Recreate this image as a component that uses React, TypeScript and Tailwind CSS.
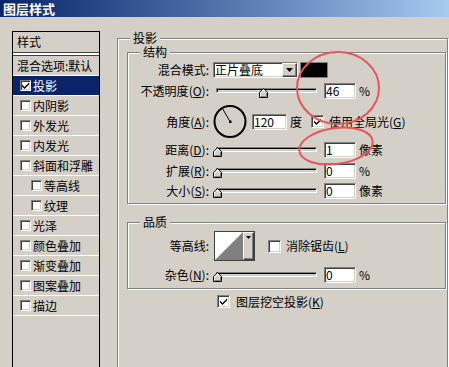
import React from "react";

const sunken =
  "border border-t-[#808080] border-l-[#808080] border-b-white border-r-white shadow-[inset_1px_1px_0_#404040,inset_-1px_-1px_0_#d4d0c8]";
const raised =
  "border border-t-white border-l-white border-b-[#404040] border-r-[#404040] shadow-[inset_-1px_-1px_0_#808080]";

function CheckMark() {
  return (
    <svg width="7" height="7" viewBox="0 0 7 7">
      <path d="M0 2.5 L2.5 5 L7 0.5 L7 2.5 L2.5 7 L0 4.5 Z" fill="#000" />
    </svg>
  );
}

function Check({ checked, small }: { checked?: boolean; small?: boolean }) {
  return (
    <span
      className={`flex shrink-0 items-center justify-center bg-white ${sunken} ${
        small ? "h-[11px] w-[11px]" : "h-[13px] w-[13px]"
      }`}
    >
      {checked && <CheckMark />}
    </span>
  );
}

function Mn({ children }: { children: React.ReactNode }) {
  return (
    <span>
      (<span className="underline underline-offset-1">{children}</span>)
    </span>
  );
}

function TextBox({ value, w = "w-[32px]" }: { value: string; w?: string }) {
  return (
    <div className={`flex h-[16px] ${w} shrink-0 items-center bg-white pl-[1px] leading-[12px] ${sunken}`}>
      {value}
    </div>
  );
}

function Thumb() {
  return (
    <svg width="9" height="10" viewBox="0 0 9 10" className="block">
      <polygon points="4.5,0.5 8.5,4.5 8.5,9.5 0.5,9.5 0.5,4.5" fill="#d4d0c8" stroke="#000" strokeWidth="1" />
      <polyline points="1.5,9 1.5,4.9 4.5,1.9 7.2,4.6" fill="none" stroke="#fff" strokeWidth="1" />
      <line x1="1.5" y1="8.5" x2="7.5" y2="8.5" stroke="#808080" strokeWidth="1" />
      <line x1="7.5" y1="5" x2="7.5" y2="8.5" stroke="#808080" strokeWidth="1" />
    </svg>
  );
}

function Slider({ value }: { value: number }) {
  return (
    <div className="relative h-[16px] w-[107px] shrink-0">
      <div className="absolute left-[3px] top-[5px] h-[5px] w-[101px] border border-t-[#808080] border-l-[#808080] border-b-white border-r-white bg-[#d4d0c8] shadow-[inset_1px_1px_0_#000]" />
      <div className="absolute top-[5px]" style={{ left: `${value}px` }}>
        <Thumb />
      </div>
    </div>
  );
}

function Group({
  title,
  className,
  children,
}: {
  title: string;
  className?: string;
  children?: React.ReactNode;
}) {
  return (
    <div className={`border border-[#808080] shadow-[inset_1px_1px_0_#fff,1px_1px_0_#fff] ${className ?? ""}`}>
      <div className="-mt-[8px] ml-[12px] flex h-[14px] w-fit items-center bg-[#d4d0c8] px-[3px] leading-[12px]">
        {title}
      </div>
      {children}
    </div>
  );
}

function Row({
  label,
  className,
  children,
}: {
  label: React.ReactNode;
  className?: string;
  children?: React.ReactNode;
}) {
  return (
    <div className={`flex items-center ${className ?? ""}`}>
      <div className="w-[81px] shrink-0 whitespace-nowrap text-right">{label}</div>
      <div className="ml-[4px] flex items-center">{children}</div>
    </div>
  );
}

function DownArrow() {
  return (
    <svg width="7" height="4" viewBox="0 0 7 4">
      <polygon points="0,0 7,0 3.5,4" fill="#000" />
    </svg>
  );
}

const listItems: { label: string; indent?: boolean; checked?: boolean; selected?: boolean }[] = [
  { label: "投影", checked: true, selected: true },
  { label: "内阴影" },
  { label: "外发光" },
  { label: "内发光" },
  { label: "斜面和浮雕" },
  { label: "等高线", indent: true },
  { label: "纹理", indent: true },
  { label: "光泽" },
  { label: "颜色叠加" },
  { label: "渐变叠加" },
  { label: "图案叠加" },
  { label: "描边" },
];

function LeftPanel() {
  return (
    <div className="ml-[12px] mt-[14px] flex h-[400px] w-[88px] shrink-0 flex-col border border-black">
      <div className="flex h-[20px] items-center pl-[4px]">样式</div>
      <div className="h-[4px] border-y border-[#404040] bg-white" />
      <div className="flex h-[20px] items-center whitespace-nowrap border-b border-white pl-[4px]">混合选项:默认</div>
      {listItems.map((it) => (
        <div
          key={it.label}
          className={`flex h-[20px] items-center border-b border-white ${it.indent ? "pl-[18px]" : "pl-[7px]"} ${
            it.selected ? "bg-[#0a246a] text-white" : ""
          }`}
        >
          <Check small checked={it.checked} />
          <span className="ml-[2px] whitespace-nowrap">{it.label}</span>
        </div>
      ))}
    </div>
  );
}

function Dial() {
  return (
    <svg width="34" height="33" viewBox="0 0 34 33" className="block shrink-0">
      <circle cx="17" cy="16.5" r="15.5" fill="#d4d0c8" stroke="#000" strokeWidth="2" />
      <line x1="17" y1="16.5" x2="9.5" y2="3.5" stroke="#000" strokeWidth="1" />
      <rect x="16" y="15.5" width="2.5" height="2.5" fill="#000" />
    </svg>
  );
}

function ContourPicker() {
  return (
    <div className="flex h-[30px] w-[41px] shrink-0 border border-[#404040] bg-[#d4d0c8]">
      <svg width="28" height="28" viewBox="0 0 28 28" className="block shrink-0">
        <rect width="28" height="28" fill="#fff" />
        <polygon points="0,28 28,0 28,28" fill="#808080" />
      </svg>
      <div className={`flex h-full w-[11px] justify-center pt-[3px] ${raised}`}>
        <svg width="5" height="3" viewBox="0 0 5 3">
          <polygon points="0,0 5,0 2.5,3" fill="#000" />
        </svg>
      </div>
    </div>
  );
}

export default function App() {
  return (
    <div className="relative flex h-[367px] w-[449px] flex-col overflow-hidden bg-[#d4d0c8] font-['Noto_Sans_CJK_SC',sans-serif] text-[12px] leading-[14px] text-black">
      <div className="h-[17px] shrink-0 bg-linear-to-r from-[#0a246a] to-[#a6caf0] pl-[3px] text-[13px] font-bold leading-[17px] text-white">
        图层样式
      </div>
      <div className="flex min-h-0 flex-1">
        <LeftPanel />
        <Group title="投影" className="ml-[17px] mt-[21px] h-[400px] w-[331px] shrink-0">
          <div className="pl-[9px]">
            <Group title="结构" className="mt-[7px] w-[319px] pb-[4px]">
              <Row label="混合模式:" className="mt-[3px] h-[16px]">
                <div className={`flex h-[16px] w-[85px] bg-white ${sunken}`}>
                  <div className="flex flex-1 items-center pl-[1px] leading-[12px]">正片叠底</div>
                  <div className={`flex h-full w-[15px] items-center justify-center bg-[#d4d0c8] ${raised}`}>
                    <DownArrow />
                  </div>
                </div>
                <div className="ml-[2px] h-[16px] w-[28px] border border-[#808080] bg-black" />
              </Row>
              <Row
                label={
                  <>
                    不透明度<Mn>O</Mn>:
                  </>
                }
                className="mt-[5px] h-[16px]"
              >
                <Slider value={46} />
                <div className="ml-[4px]">
                  <TextBox value="46" />
                </div>
                <span className="ml-[3px]">%</span>
              </Row>
              <Row
                label={
                  <>
                    角度<Mn>A</Mn>:
                  </>
                }
                className="mt-[6px] h-[33px]"
              >
                <Dial />
                <div className="ml-[5px]">
                  <TextBox value="120" w="w-[35px]" />
                </div>
                <span className="ml-[3px]">度</span>
                <div className="ml-[9px]">
                  <Check checked />
                </div>
                <span className="ml-[5px] whitespace-nowrap">
                  使用全局光<Mn>G</Mn>
                </span>
              </Row>
              <Row
                label={
                  <>
                    距离<Mn>D</Mn>:
                  </>
                }
                className="mt-[4px] h-[16px]"
              >
                <Slider value={0} />
                <div className="ml-[4px]">
                  <TextBox value="1" />
                </div>
                <span className="ml-[3px]">像素</span>
              </Row>
              <Row
                label={
                  <>
                    扩展<Mn>R</Mn>:
                  </>
                }
                className="mt-[5px] h-[16px]"
              >
                <Slider value={0} />
                <div className="ml-[4px]">
                  <TextBox value="0" />
                </div>
                <span className="ml-[3px]">%</span>
              </Row>
              <Row
                label={
                  <>
                    大小<Mn>S</Mn>:
                  </>
                }
                className="mt-[4px] h-[16px]"
              >
                <Slider value={0} />
                <div className="ml-[4px]">
                  <TextBox value="0" />
                </div>
                <span className="ml-[3px]">像素</span>
              </Row>
            </Group>

            <Group title="品质" className="mt-[18px] w-[319px] pb-[5px]">
              <Row label="等高线:" className="mt-[2px] h-[30px]">
                <div className="ml-[1px]">
                  <ContourPicker />
                </div>
                <div className="ml-[13px]">
                  <Check />
                </div>
                <span className="ml-[5px] whitespace-nowrap">
                  消除锯齿<Mn>L</Mn>
                </span>
              </Row>
              <Row
                label={
                  <>
                    杂色<Mn>N</Mn>:
                  </>
                }
                className="mt-[6px] h-[16px]"
              >
                <Slider value={0} />
                <div className="ml-[4px]">
                  <TextBox value="0" />
                </div>
                <span className="ml-[3px]">%</span>
              </Row>
            </Group>

            <div className="ml-[90px] mt-[6px] flex h-[13px] items-center">
              <Check checked />
              <span className="ml-[6px] whitespace-nowrap">
                图层挖空投影<Mn>K</Mn>
              </span>
            </div>
          </div>
        </Group>
      </div>

      {/* red annotation ellipses drawn over the screenshot */}
      <svg
        className="pointer-events-none absolute left-0 top-0"
        width="449"
        height="367"
        viewBox="0 0 449 367"
      >
        <ellipse cx="338" cy="88" rx="41" ry="36" fill="none" stroke="#e8545a" strokeWidth="2" />
        <ellipse
          cx="336"
          cy="146"
          rx="37"
          ry="18"
          fill="none"
          stroke="#e8545a"
          strokeWidth="2"
          transform="rotate(-8 336 146)"
        />
      </svg>
    </div>
  );
}
